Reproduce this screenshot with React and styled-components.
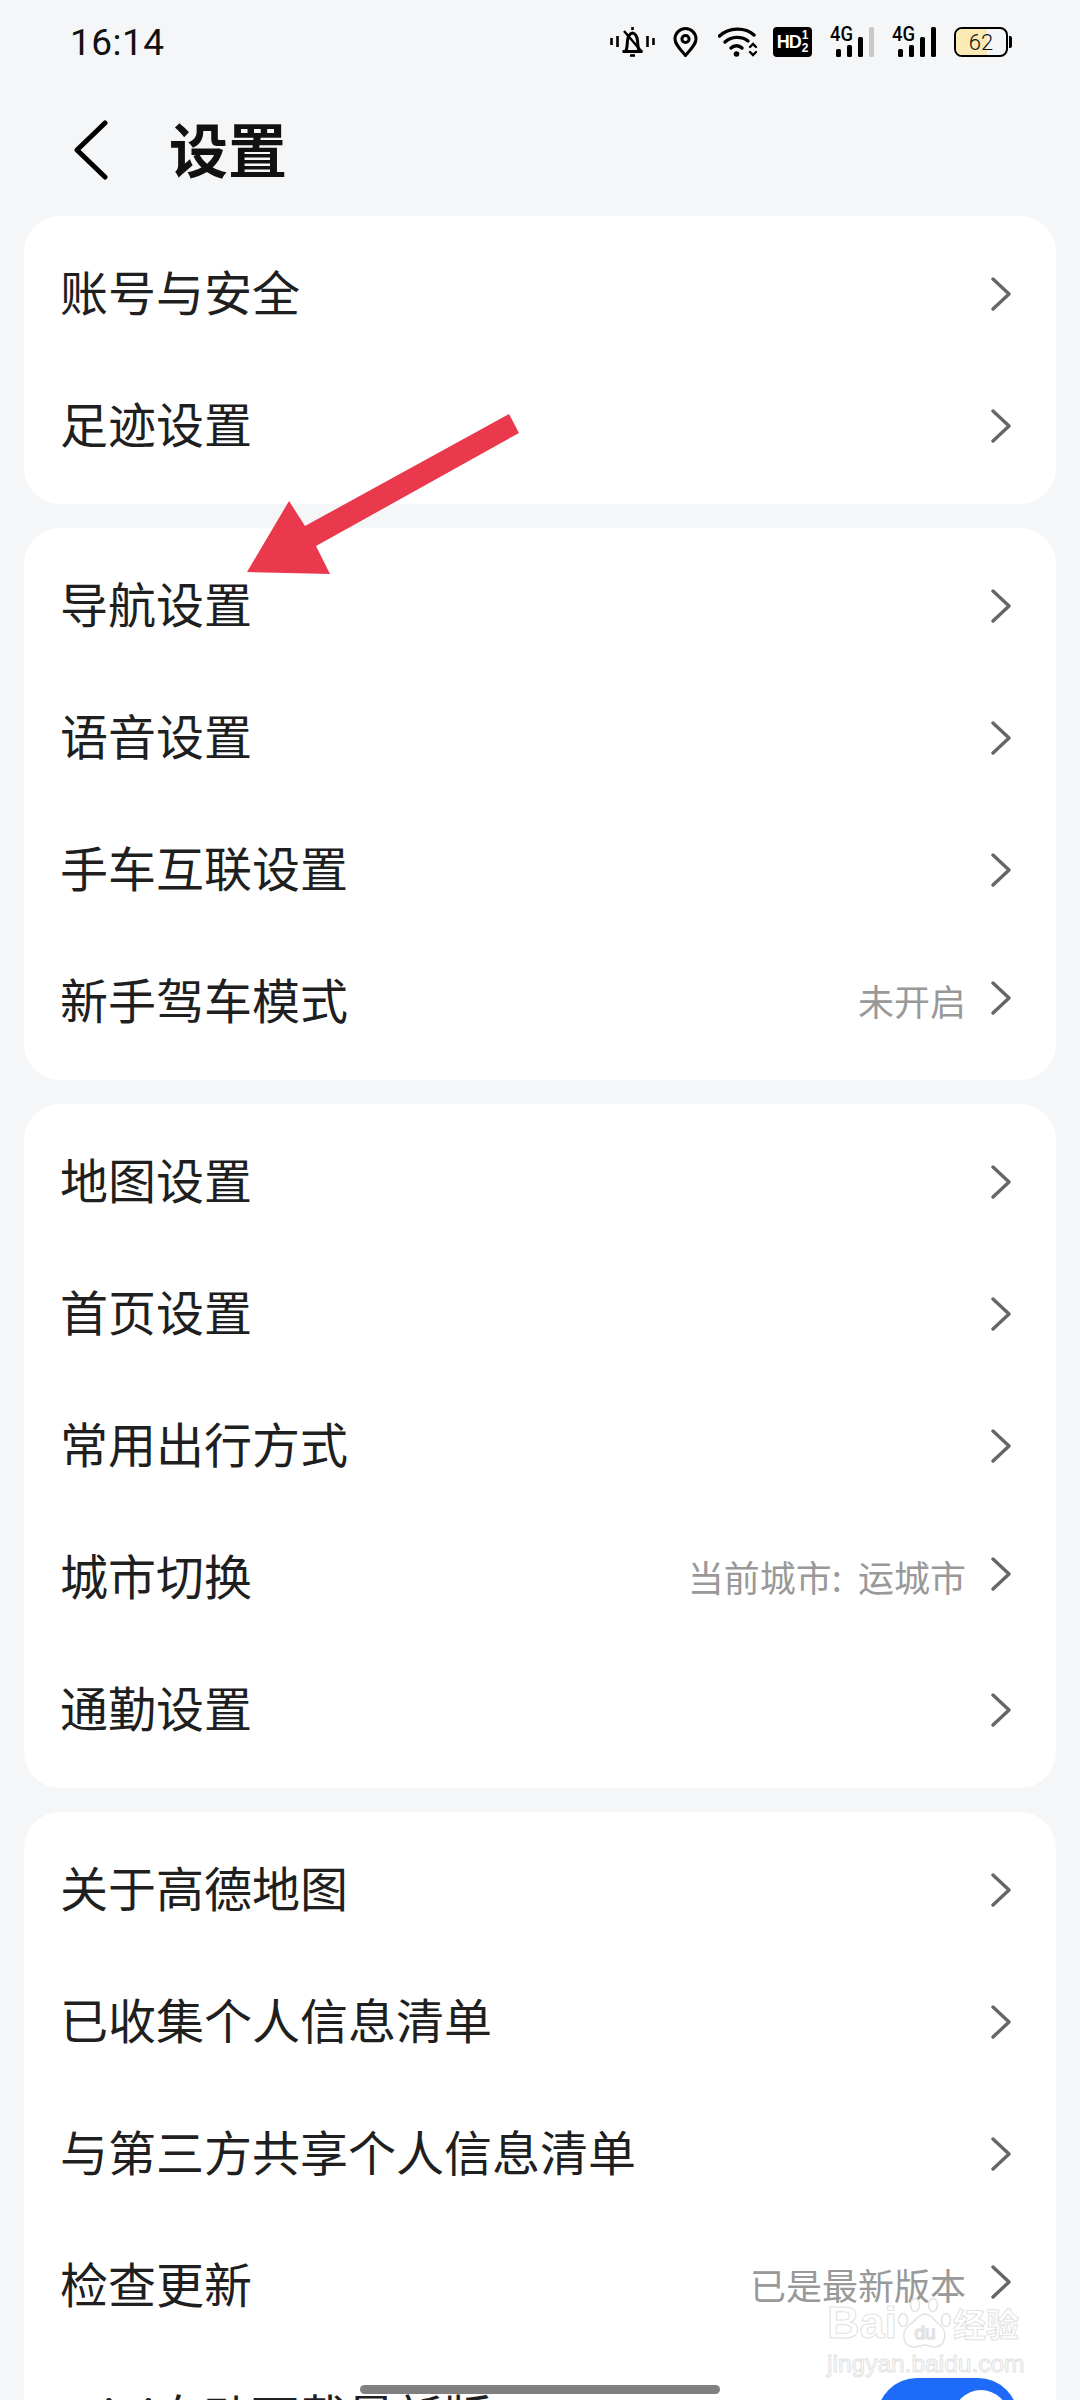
import React from 'react';
import styled, { createGlobalStyle } from 'styled-components';

const groups = [
  [{ label: '账号与安全' }, { label: '足迹设置' }],
  [{ label: '导航设置' }, { label: '语音设置' }, { label: '手车互联设置' }, { label: '新手驾车模式', value: '未开启' }],
  [
    { label: '地图设置' },
    { label: '首页设置' },
    { label: '常用出行方式' },
    { label: '城市切换', value: '当前城市:\u00a0\u00a0运城市' },
    { label: '通勤设置' },
  ],
  [
    { label: '关于高德地图' },
    { label: '已收集个人信息清单' },
    { label: '与第三方共享个人信息清单' },
    { label: '检查更新', value: '已是最新版本' },
    { label: 'WiFi自动下载最新版', toggle: true },
  ],
];

const Chevron = () => (
  <ChevronIcon viewBox="0 0 20 34" fill="none" stroke="#666" strokeWidth="3.4" strokeLinecap="round" strokeLinejoin="round">
    <path d="M2 2 L18 17 L2 32" />
  </ChevronIcon>
);

const Signal = ({ weak }) => (
  <SignalBox>
    <SignalLabel>4G</SignalLabel>
    <svg width="44" height="30" viewBox="0 0 44 30" fill="#000">
      <rect x="6" y="22" width="5" height="8" rx="1.5" />
      <rect x="17" y="18" width="5" height="12" rx="1.5" />
      <rect x="28" y="10" width="5" height="20" rx="1.5" />
      <rect x="39" y="0" width="5" height="30" rx="1.5" fill={weak ? '#c8c8c8' : '#000'} />
    </svg>
  </SignalBox>
);

const App = () => (
  <Page>
    <GlobalStyle />
    <StatusBar>
      <Clock>16:14</Clock>
      <StatusIcons>
        <svg width="45" height="30" viewBox="0 0 45 30" fill="none" stroke="#000" strokeWidth="3">
          <path d="M1.5 11v7M7.5 9v11M37.5 9v11M43.5 11v7" strokeWidth="2.6" />
          <path d="M12.5 24.5h20M15.5 24.5c2-3 1.5-7 2-11 .5-4 2-7 5-7.5 3 .5 4.5 3.5 5 7.5.5 4 0 8 2 11" strokeLinejoin="round" />
          <path d="M14 4l18 21" strokeWidth="2.4" />
          <path d="M20 28.5h5" strokeWidth="2.6" />
          <path d="M22.5 0v3" strokeWidth="2.6" />
        </svg>
        <svg width="25" height="30" viewBox="0 0 25 30" fill="none" stroke="#000" strokeWidth="3">
          <path d="M12.5 28.5C6 21 2 17 2 12a10.5 10.5 0 0 1 21 0c0 5-4 9-10.5 16.5z" strokeLinejoin="round" />
          <circle cx="12.5" cy="12" r="3.6" />
        </svg>
        <WifiIcon width="40" height="30" viewBox="0 0 40 30" fill="none" stroke="#000" strokeLinecap="round">
          <path d="M1.5 9C11 0 27 0 36 8" strokeWidth="3.4" />
          <path d="M7 15c6-6 17-6 23-1" strokeWidth="3.4" />
          <path d="M13 21c3-3 8-3 11 0" strokeWidth="3.4" />
          <circle cx="18.5" cy="27" r="2.8" fill="#000" stroke="none" />
          <path d="M32 20l3-3 3 3M32 25l3 3 3-3" strokeWidth="2.4" />
        </WifiIcon>
        <HdBadge>
          HD
          <HdFraction>
            <span>1</span>
            <span>2</span>
          </HdFraction>
        </HdBadge>
        <Signal weak />
        <Signal />
        <Battery>
          <BatteryBody>
            <BatteryFill style={{ width: '62%' }} />
            <BatteryLabel>62</BatteryLabel>
          </BatteryBody>
          <BatteryCap />
        </Battery>
      </StatusIcons>
    </StatusBar>

    <Header>
      <svg width="34" height="60" viewBox="0 0 34 60" fill="none" stroke="#000" strokeWidth="5" strokeLinecap="round" strokeLinejoin="round">
        <path d="M31 3 L3 30 L31 57" />
      </svg>
      <Title>设置</Title>
    </Header>

    <Groups>
      {groups.map((rows, i) => (
        <Card key={i}>
          {rows.map((row) => (
            <Row key={row.label}>
              <Label>{row.label}</Label>
              {row.toggle ? (
                <Toggle>
                  <Knob />
                </Toggle>
              ) : (
                <Trailing $lifted={!!row.value}>
                  {row.value && <Value>{row.value}</Value>}
                  <Chevron />
                </Trailing>
              )}
            </Row>
          ))}
        </Card>
      ))}
    </Groups>

    <Arrow viewBox="0 0 1080 2400" fill="#ea384d">
      <polygon points="509,414 519,433 316,546 330,574 247,572 289,501 305,526" />
    </Arrow>

    <Watermark>
      <WatermarkTop>
        <WatermarkLatin>Bai</WatermarkLatin>
        <Paw viewBox="0 0 56 50" fill="#fff" stroke="#e2e2e2" strokeWidth="1.5">
          <ellipse cx="6" cy="22" rx="4.5" ry="6.5" />
          <ellipse cx="18" cy="7" rx="4.5" ry="6.5" />
          <ellipse cx="36" cy="7" rx="4.5" ry="6.5" />
          <ellipse cx="49" cy="22" rx="4.5" ry="6.5" />
          <path d="M28 16c7 0 9 7 15 11 8 6 6 22-6 22-4 0-6-2-9-2s-6 2-11 2C5 49 4 33 12 27c7-4 9-11 16-11z" />
          <WatermarkDu x="28" y="41" textAnchor="middle">du</WatermarkDu>
        </Paw>
        <WatermarkCjk>经验</WatermarkCjk>
      </WatermarkTop>
      <WatermarkUrl>jingyan.baidu.com</WatermarkUrl>
    </Watermark>

    <HomeBar />
  </Page>
);

const GlobalStyle = createGlobalStyle`
  html, body {
    margin: 0;
    padding: 0;
    background: #f5f6f8;
  }
`;

const Page = styled.div`
  position: relative;
  width: 1080px;
  height: 2400px;
  overflow: hidden;
  background: #f5f6f8;
  font-family: "Noto Sans CJK SC", Roboto, sans-serif;
  color: #1a1a1a;
`;

const StatusBar = styled.div`
  display: flex;
  align-items: center;
  justify-content: space-between;
  height: 84px;
  padding: 0 68px 0 70px;
`;

const Clock = styled.div`
  font-family: Roboto, sans-serif;
  font-size: 37px;
  color: #111;
  letter-spacing: 0.5px;
`;

const StatusIcons = styled.div`
  display: flex;
  align-items: center;
  gap: 18px;
`;

const WifiIcon = styled.svg`
  margin-left: 2px;
  margin-right: -3px;
`;

const HdBadge = styled.div`
  display: flex;
  align-items: center;
  justify-content: center;
  gap: 1px;
  width: 39px;
  height: 30px;
  border-radius: 4px;
  background: #000;
  color: #fff;
  font-family: "Liberation Sans", sans-serif;
  font-size: 18px;
  font-weight: 700;
  letter-spacing: -1px;
`;

const HdFraction = styled.span`
  display: flex;
  flex-direction: column;
  font-size: 12px;
  line-height: 13px;
  letter-spacing: 0;
`;

const SignalBox = styled.div`
  position: relative;
  width: 44px;
  height: 30px;
`;

const SignalLabel = styled.span`
  position: absolute;
  left: 0;
  top: 0;
  font-family: Roboto, sans-serif;
  font-size: 20px;
  font-weight: 500;
  line-height: 15px;
  color: #000;
  transform: scaleX(0.92);
  transform-origin: left center;
`;

const Battery = styled.div`
  display: flex;
  align-items: center;
  gap: 1px;
`;

const BatteryBody = styled.div`
  position: relative;
  width: 54px;
  height: 30px;
  box-sizing: border-box;
  border: 2.5px solid #000;
  border-radius: 8px;
  overflow: hidden;
`;

const BatteryFill = styled.div`
  height: 100%;
  background: #fbe9b6;
`;

const BatteryLabel = styled.span`
  position: absolute;
  inset: 0;
  display: flex;
  align-items: center;
  justify-content: center;
  font-family: Roboto, sans-serif;
  font-size: 22px;
  font-weight: 300;
  color: #111;
`;

const BatteryCap = styled.div`
  width: 3px;
  height: 12px;
  border-radius: 0 2px 2px 0;
  background: #000;
`;

const Header = styled.div`
  display: flex;
  align-items: center;
  gap: 61px;
  height: 132px;
  padding-left: 74px;
`;

const Title = styled.h1`
  margin: 0 0 6px;
  font-size: 59px;
  font-weight: 700;
  color: #111;
`;

const Groups = styled.div`
  display: flex;
  flex-direction: column;
  gap: 24px;
  padding: 0 24px;
`;

const Card = styled.div`
  padding: 12px 0;
  border-radius: 36px;
  background: #fff;
`;

const Row = styled.div`
  display: flex;
  align-items: center;
  justify-content: space-between;
  height: 132px;
  padding: 0 45px 0 36px;
`;

const Label = styled.span`
  margin-bottom: 8px;
  font-size: 48px;
  color: #1f1f1f;
`;

const Trailing = styled.div`
  display: flex;
  align-items: center;
  gap: 25px;
  margin-bottom: ${(p) => (p.$lifted ? '8px' : '0')};
`;

const Value = styled.span`
  padding-top: 3px;
  font-size: 36px;
  color: #999;
`;

const ChevronIcon = styled.svg`
  width: 20px;
  height: 34px;
`;

const Toggle = styled.div`
  display: flex;
  flex: none;
  align-items: center;
  justify-content: flex-end;
  width: 141px;
  height: 80px;
  margin-right: -7px;
  padding-right: 9px;
  box-sizing: border-box;
  border-radius: 40px;
  background: #1e6bfa;
`;

const Knob = styled.div`
  width: 56px;
  height: 56px;
  border-radius: 50%;
  background: #fff;
`;

const Arrow = styled.svg`
  position: absolute;
  inset: 0;
  width: 1080px;
  height: 2400px;
  pointer-events: none;
`;

const Watermark = styled.div`
  position: absolute;
  left: 827px;
  top: 2298px;
  width: 200px;
  font-family: "Liberation Sans", "Noto Sans CJK SC", sans-serif;
  color: rgba(255, 255, 255, 0.7);
  -webkit-text-stroke: 1px #e2e2e2;
`;

const WatermarkTop = styled.div`
  display: flex;
  align-items: flex-end;
  height: 50px;
  white-space: nowrap;
`;

const WatermarkLatin = styled.span`
  font-size: 45px;
  font-weight: 700;
  line-height: 50px;
`;

const WatermarkCjk = styled.span`
  font-size: 33px;
  font-weight: 700;
  line-height: 44px;
`;

const WatermarkDu = styled.text`
  font-size: 19px;
  font-weight: 400;
`;

const Paw = styled.svg`
  flex: none;
  width: 56px;
  height: 50px;
`;

const WatermarkUrl = styled.div`
  margin-top: 3px;
  font-size: 24.5px;
  line-height: 26px;
  white-space: nowrap;
`;

const HomeBar = styled.div`
  position: absolute;
  left: 360px;
  top: 2385px;
  width: 360px;
  height: 9px;
  border-radius: 5px;
  background: #808080;
`;

export default App;
